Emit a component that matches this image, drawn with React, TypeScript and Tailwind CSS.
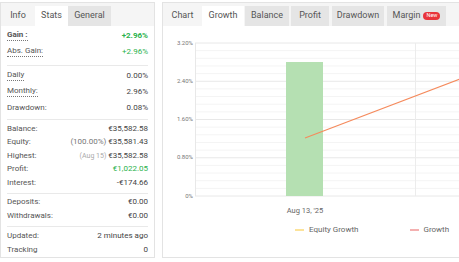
import React from "react";

const green = "text-[#2bb24c]";

function Row({
  label,
  value,
  h = "h-[16px]",
  under = false,
  bold = false,
}: {
  label: string;
  value: React.ReactNode;
  h?: string;
  under?: boolean;
  bold?: boolean;
}) {
  return (
    <div className={`flex items-center justify-between px-[6px] ${h}`}>
      <span
        className={`leading-none text-[#555] ${
          under ? "border-b border-dotted border-[#777] pb-[1px]" : ""
        } ${bold ? "font-bold text-[#333]" : ""}`}
      >
        {label}
      </span>
      <span className="leading-none text-[#444]">{value}</span>
    </div>
  );
}

function Sep() {
  return <div className="mx-[6px] border-t border-[#e9e9e9]" />;
}

function StatsPanel() {
  return (
    <div className="w-[155px] h-[256px] shrink-0 border border-[#e3e3e3] flex flex-col text-[8px]">
      <div className="h-[23px] bg-[#f5f5f5] flex items-end text-[9px] text-[#555]">
        <div className="w-[34px] h-[20px] flex items-center justify-center">Info</div>
        <div className="w-[33px] h-[20px] flex items-center justify-center bg-white">Stats</div>
        <div className="w-[43px] h-[20px] flex items-center justify-center bg-[#e5e5e5]">General</div>
      </div>
      <div className="pt-[2px] pb-[5px]">
        <Row label="Gain :" under bold value={<span className={`${green} font-bold`}>+2.96%</span>} />
        <Row label="Abs. Gain:" under value={<span className={green}>+2.96%</span>} />
      </div>
      <Sep />
      <div className="pt-[2px] pb-[3px]">
        <Row label="Daily" under value="0.00%" />
        <Row label="Monthly:" under value="2.96%" />
        <Row label="Drawdown:" value="0.08%" />
      </div>
      <Sep />
      <div className="pt-[2px] pb-[3px]">
        <Row label="Balance:" h="h-[13.5px]" value="€35,582.58" />
        <Row
          label="Equity:"
          h="h-[13.5px]"
          value={
            <>
              <span className="text-[#777]">(100.00%)</span> €35,581.43
            </>
          }
        />
        <Row
          label="Highest:"
          h="h-[13.5px]"
          value={
            <>
              <span className="text-[#aaa] text-[7px]">(Aug 15)</span> €35,582.58
            </>
          }
        />
        <Row label="Profit:" h="h-[13.5px]" value={<span className={green}>€1,022.05</span>} />
        <Row label="Interest:" h="h-[13.5px]" value="-€174.66" />
      </div>
      <Sep />
      <div className="pt-[2px] pb-[3px]">
        <Row label="Deposits:" h="h-[13.5px]" value="€0.00" />
        <Row label="Withdrawals:" h="h-[13.5px]" value="€0.00" />
      </div>
      <Sep />
      <div className="pt-[2px]">
        <Row label="Updated:" h="h-[14px]" value="2 minutes ago" />
        <Row label="Tracking" h="h-[14px]" value="0" />
      </div>
    </div>
  );
}

function Chart() {
  const majors = [17, 55.25, 93.5, 131.75, 170];
  const labels = ["3.20%", "2.40%", "1.60%", "0.80%", "0%"];
  const minors: number[] = [];
  for (let i = 0; i < 4; i++) {
    for (let j = 1; j < 5; j++) minors.push(majors[i] + j * 7.65);
  }
  return (
    <svg width="309" height="192" className="block">
      {minors.map((y) => (
        <line key={y} x1="32" x2="309" y1={y} y2={y} stroke="#f4f4f4" strokeWidth="1" />
      ))}
      {majors.map((y) => (
        <line key={y} x1="32" x2="309" y1={y} y2={y} stroke="#e8e8e8" strokeWidth="1" />
      ))}
      <line x1="32.5" x2="32.5" y1="17" y2="170" stroke="#e8e8e8" />
      <line x1="252.5" x2="252.5" y1="17" y2="170" stroke="#ececec" />
      <rect x="123" y="36" width="37" height="134" fill="#b5e0b2" />
      <line x1="142" y1="112" x2="309" y2="48.5" stroke="#f58a5c" strokeWidth="1.2" />
      {labels.map((t, i) => (
        <text
          key={t}
          x="30"
          y={majors[i]}
          textAnchor="end"
          dominantBaseline="middle"
          fontSize="6"
          fill="#777"
          fontFamily="Roboto, sans-serif"
        >
          {t}
        </text>
      ))}
      <text
        x="142"
        y="185"
        textAnchor="middle"
        dominantBaseline="middle"
        fontSize="7.5"
        fill="#666"
        fontFamily="Roboto, sans-serif"
      >
        Aug 13, '25
      </text>
    </svg>
  );
}

function ChartPanel() {
  return (
    <div className="w-[310px] h-[256px] shrink-0 border border-[#e3e3e3] flex flex-col">
      <div className="h-[23px] bg-[#f5f5f5] flex items-end text-[9px] text-[#555]">
        <div className="w-[39px] h-[20px] flex items-center justify-center">Chart</div>
        <div className="w-[42px] h-[20px] flex items-center justify-center bg-white">Growth</div>
        <div className="ml-[1px] w-[44px] h-[20px] flex items-center justify-center bg-[#e5e5e5]">Balance</div>
        <div className="ml-[2px] w-[38px] h-[20px] flex items-center justify-center bg-[#e5e5e5]">Profit</div>
        <div className="ml-[3px] w-[52px] h-[20px] flex items-center justify-center bg-[#e5e5e5]">Drawdown</div>
        <div className="ml-[3px] w-[59px] h-[20px] flex items-center justify-center gap-[3px] bg-[#e5e5e5]">
          Margin
          <span className="rounded-full bg-[#e8343b] text-white text-[5.5px] leading-none px-[3px] py-[1px]">
            New
          </span>
        </div>
      </div>
      <Chart />
      <div className="mt-[8px] flex items-center text-[8px] text-[#666] leading-none">
        <div className="ml-[132px] w-[9px] h-[1.5px] bg-[#fce39a]" />
        <span className="ml-[5px]">Equity Growth</span>
        <div className="ml-[52px] w-[9px] h-[1.5px] bg-[#f4b0b0]" />
        <span className="ml-[4px]">Growth</span>
      </div>
    </div>
  );
}

export default function App() {
  return (
    <div className="w-[459px] h-[262px] overflow-hidden bg-white flex gap-[7px] pt-[2px] font-[Roboto,sans-serif]">
      <StatsPanel />
      <ChartPanel />
    </div>
  );
}
